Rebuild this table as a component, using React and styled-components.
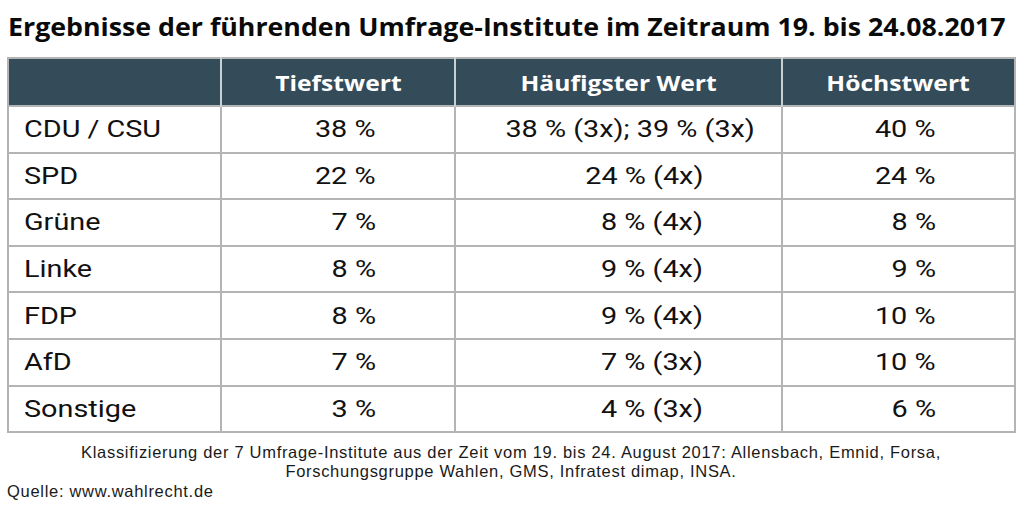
import React from "react";
import styled, { createGlobalStyle } from "styled-components";

const rows = [
  { party: "CDU / CSU", low: "38 %", mode: "38 % (3x); 39 % (3x)", high: "40 %", wide: true },
  { party: "SPD", low: "22 %", mode: "24 % (4x)", high: "24 %" },
  { party: "Grüne", low: "7 %", mode: "8 % (4x)", high: "8 %" },
  { party: "Linke", low: "8 %", mode: "9 % (4x)", high: "9 %" },
  { party: "FDP", low: "8 %", mode: "9 % (4x)", high: "10 %" },
  { party: "AfD", low: "7 %", mode: "7 % (3x)", high: "10 %" },
  { party: "Sonstige", low: "3 %", mode: "4 % (3x)", high: "6 %" },
];

const heads = ["", "Tiefstwert", "Häufigster Wert", "Höchstwert"];

export default function App() {
  return (
    <Page>
      <GlobalStyle />
      <Title>
        <Stretch $origin="left" $factor={1.07}>
          Ergebnisse der führenden Umfrage-Institute im Zeitraum 19. bis 24.08.2017
        </Stretch>
      </Title>
      <Table>
        <colgroup>
          <col style={{ width: 213 }} />
          <col style={{ width: 234 }} />
          <col style={{ width: 327 }} />
          <col style={{ width: 233 }} />
        </colgroup>
        <thead>
          <tr>
            {heads.map(h => (
              <HeadCell key={h || "party"}>
                <Stretch $origin="center" $factor={1.12}>{h}</Stretch>
              </HeadCell>
            ))}
          </tr>
        </thead>
        <tbody>
          {rows.map(item => {
            return (
              <tr key={item.party}>
                <PartyCell>
                  <Stretch $origin="left">{item.party}</Stretch>
                </PartyCell>
                <ValueCell>
                  <Stretch>{item.low}</Stretch>
                </ValueCell>
                <ValueCell $pad={item.wide ? 26 : 78}>
                  <Stretch>{item.mode}</Stretch>
                </ValueCell>
                <ValueCell>
                  <Stretch>{item.high}</Stretch>
                </ValueCell>
              </tr>
            );
          })}
        </tbody>
      </Table>
      <Note>
        Klassifizierung der 7 Umfrage-Institute aus der Zeit vom 19. bis 24. August 2017: Allensbach, Emnid, Forsa,
        <br />
        Forschungsgruppe Wahlen, GMS, Infratest dimap, INSA.
      </Note>
      <Source>Quelle: www.wahlrecht.de</Source>
    </Page>
  );
}

const GlobalStyle = createGlobalStyle`
  html, body {
    margin: 0;
    padding: 0;
    background: #ffffff;
  }
`;

const Page = styled.div`
  width: 1024px;
  height: 510px;
  padding: 9px 0 0 7px;
  box-sizing: border-box;
  color: #111111;
`;

const Title = styled.h1`
  margin: 0 0 0 1px;
  font-family: "Open Sans", "Noto Sans", sans-serif;
  font-weight: 700;
  font-size: 25px;
  line-height: 35px;
  white-space: nowrap;
  color: #0a0a0a;
`;

const Table = styled.table`
  margin-top: 13px;
  width: 1007px;
  border-collapse: collapse;
  table-layout: fixed;
  border: 2px solid #b4b4b4;
`;

const HeadCell = styled.th`
  height: 46px;
  padding: 0;
  background: #344b5a;
  color: #ffffff;
  font-family: "Open Sans", "Noto Sans", sans-serif;
  font-weight: 700;
  font-size: 22px;
  text-align: center;
  border-left: 2px solid #c9d0d4;
  &:first-child {
    border-left: none;
  }
`;

const PartyCell = styled.td`
  height: 44.6px;
  padding: 0 0 0 15px;
  border: 2px solid #b4b4b4;
  font-family: Roboto, "Liberation Sans", sans-serif;
  font-size: 24px;
  text-align: left;
  white-space: nowrap;
`;

const ValueCell = styled(PartyCell)`
  padding: 0 ${props => props.$pad || 78}px 0 0;
  text-align: right;
`;

// the source graphic is drawn a little wider than the fonts' natural width
const Stretch = styled.span`
  display: inline-block;
  transform: scaleX(${props => props.$factor || 1.2});
  transform-origin: ${props => props.$origin || "right"} center;
`;

const Note = styled.p`
  margin: 10px 0 0;
  width: 1008px;
  font-family: "Liberation Sans", Arial, sans-serif;
  font-size: 16.5px;
  line-height: 19px;
  letter-spacing: 0.7px;
  text-align: center;
  color: #1a1a1a;
`;

const Source = styled.p`
  margin: 1px 0 0;
  font-family: "Liberation Sans", Arial, sans-serif;
  font-size: 16.5px;
  line-height: 19px;
  letter-spacing: 0.7px;
  color: #1a1a1a;
`;
